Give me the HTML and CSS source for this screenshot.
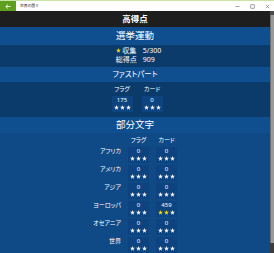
FILE: index.html
```html
<!DOCTYPE html>
<html lang="ja">
<head>
<meta charset="utf-8">
<title>世界の国々</title>
<link rel="stylesheet" href="styles.css">
</head>
<body>
<svg class="defs" width="0" height="0" aria-hidden="true">
  <symbol id="star" viewBox="0 0 10 10"><polygon points="5,0.2 6.25,3.55 9.8,3.7 7.05,5.95 8,9.6 5,7.5 2,9.6 2.95,5.95 0.2,3.7 3.75,3.55"/></symbol>
</svg>
<div class="window">
  <div class="titlebar">
    <div class="back">
      <svg width="6" height="5" viewBox="0 0 6 5"><path d="M3 0.5 L0.8 2.5 L3 4.5 M0.8 2.5 H5.5" fill="none" stroke="#fff" stroke-width="0.8"/></svg>
    </div>
    <div class="title">世界の国々</div>
    <div class="controls">
      <svg width="5" height="5" viewBox="0 0 5 5"><path d="M0.5 2.5 H4.5" stroke="#666" stroke-width="0.6"/></svg>
      <svg width="5" height="5" viewBox="0 0 5 5"><rect x="0.8" y="0.8" width="3.4" height="3.4" fill="none" stroke="#666" stroke-width="0.6"/></svg>
      <svg width="5" height="5" viewBox="0 0 5 5"><path d="M0.8 0.8 L4.2 4.2 M4.2 0.8 L0.8 4.2" stroke="#666" stroke-width="0.6"/></svg>
    </div>
  </div>
  <div class="app">
    <main class="main">
      <div class="header">高得点</div>

      <section class="sec sec-dark">
        <div class="band band-campaign">選挙運動</div>
        <div class="summary">
          <span class="k"><svg class="star gold"><use href="#star"/></svg>収集</span><span class="v">5/300</span>
          <span class="k">総得点</span><span class="v">909</span>
        </div>
      </section>

      <section class="sec sec-dark">
        <div class="band band-first">ファストパート</div>
        <div class="first">
          <div class="colhead">フラグ</div>
          <div class="colhead">カード</div>
          <div class="box"><div class="num">175</div><div class="stars"><svg class="star"><use href="#star"/></svg><svg class="star"><use href="#star"/></svg><svg class="star"><use href="#star"/></svg></div></div>
          <div class="box"><div class="num">0</div><div class="stars"><svg class="star"><use href="#star"/></svg><svg class="star"><use href="#star"/></svg><svg class="star"><use href="#star"/></svg></div></div>
        </div>
      </section>

      <section class="sec sec-light">
        <div class="band band-part">部分文字</div>
        <div class="parts">
          <div></div><div class="colhead">フラグ</div><div class="colhead">カード</div>

          <div class="rowlabel">アフリカ</div>
          <div class="box"><div class="num">0</div><div class="stars"><svg class="star"><use href="#star"/></svg><svg class="star"><use href="#star"/></svg><svg class="star"><use href="#star"/></svg></div></div>
          <div class="box"><div class="num">0</div><div class="stars"><svg class="star"><use href="#star"/></svg><svg class="star"><use href="#star"/></svg><svg class="star"><use href="#star"/></svg></div></div>

          <div class="rowlabel">アメリカ</div>
          <div class="box"><div class="num">0</div><div class="stars"><svg class="star"><use href="#star"/></svg><svg class="star"><use href="#star"/></svg><svg class="star"><use href="#star"/></svg></div></div>
          <div class="box"><div class="num">0</div><div class="stars"><svg class="star"><use href="#star"/></svg><svg class="star"><use href="#star"/></svg><svg class="star"><use href="#star"/></svg></div></div>

          <div class="rowlabel">アジア</div>
          <div class="box"><div class="num">0</div><div class="stars"><svg class="star"><use href="#star"/></svg><svg class="star"><use href="#star"/></svg><svg class="star"><use href="#star"/></svg></div></div>
          <div class="box"><div class="num">0</div><div class="stars"><svg class="star"><use href="#star"/></svg><svg class="star"><use href="#star"/></svg><svg class="star"><use href="#star"/></svg></div></div>

          <div class="rowlabel">ヨーロッパ</div>
          <div class="box"><div class="num">0</div><div class="stars"><svg class="star"><use href="#star"/></svg><svg class="star"><use href="#star"/></svg><svg class="star"><use href="#star"/></svg></div></div>
          <div class="box"><div class="num">459</div><div class="stars"><svg class="star gold"><use href="#star"/></svg><svg class="star gold"><use href="#star"/></svg><svg class="star"><use href="#star"/></svg></div></div>

          <div class="rowlabel">オセアニア</div>
          <div class="box"><div class="num">0</div><div class="stars"><svg class="star"><use href="#star"/></svg><svg class="star"><use href="#star"/></svg><svg class="star"><use href="#star"/></svg></div></div>
          <div class="box"><div class="num">0</div><div class="stars"><svg class="star"><use href="#star"/></svg><svg class="star"><use href="#star"/></svg><svg class="star"><use href="#star"/></svg></div></div>

          <div class="rowlabel">世界</div>
          <div class="box"><div class="num">0</div><div class="stars"><svg class="star"><use href="#star"/></svg><svg class="star"><use href="#star"/></svg><svg class="star"><use href="#star"/></svg></div></div>
          <div class="box"><div class="num">0</div><div class="stars"><svg class="star"><use href="#star"/></svg><svg class="star"><use href="#star"/></svg><svg class="star"><use href="#star"/></svg></div></div>
        </div>
      </section>
    </main>
    <div class="scrollbar">
      <div class="sb-up"></div>
      <div class="sb-track"></div>
      <div class="sb-down"></div>
    </div>
  </div>
</div>
</body>
</html>
```

FILE: styles.css
```css
html, body {
  margin: 0;
  padding: 0;
}
body {
  width: 274px;
  height: 253px;
  overflow: hidden;
  font-family: "Noto Sans", "Noto Sans CJK JP", sans-serif;
  font-feature-settings: "palt";
  color: #fff;
  background: #104a86;
}
.defs {
  position: absolute;
  width: 0;
  height: 0;
}
.window {
  display: flex;
  flex-direction: column;
  height: 253px;
}
.titlebar {
  height: 10px;
  border-top: 1px solid #c9e2a6;
  background: #fff;
  display: flex;
  align-items: center;
  flex: none;
}
.back {
  width: 16px;
  height: 10px;
  background: #5f9f1f;
  display: flex;
  align-items: center;
  justify-content: center;
}
.back svg { display: block; }
.title {
  margin-left: 4px;
  font-size: 3.8px;
  color: #222;
  line-height: 10px;
  flex: 1;
}
.controls {
  display: flex;
  gap: 10px;
  padding-right: 4px;
  align-items: center;
}
.controls svg { display: block; }
.app {
  flex: 1;
  display: flex;
  min-height: 0;
}
.main {
  width: 270px;
  flex: none;
  display: flex;
  flex-direction: column;
}
.header {
  height: 16px;
  background: #1e1e1e;
  text-align: center;
  font-weight: bold;
  font-size: 8.5px;
  line-height: 16px;
}
.band {
  background: #0f4f8f;
  text-align: center;
}
.band-campaign {
  height: 18px;
  line-height: 18px;
  font-size: 9.5px;
}
.band-first {
  height: 15px;
  line-height: 15px;
  font-size: 7.5px;
}
.band-part {
  height: 16px;
  line-height: 16px;
  font-size: 9.5px;
}
.sec-dark { background: #0b3b6b; }
.sec-light { background: #104a86; flex: 1; }

.summary {
  display: grid;
  grid-template-columns: auto auto;
  column-gap: 6px;
  justify-content: center;
  padding: 1px 0 3px 7px;
  font-size: 7px;
  line-height: 9px;
}
.summary .k {
  display: flex;
  align-items: center;
  gap: 1.5px;
}
.summary .star {
  width: 5px;
  height: 5px;
}

.first {
  display: grid;
  grid-template-columns: 21px 21px;
  column-gap: 9px;
  justify-content: center;
  padding: 3px 0 5px 4px;
}
.colhead {
  text-align: center;
  font-size: 6px;
  line-height: 9px;
  white-space: nowrap;
}
.first .colhead { margin-bottom: 2px; }

.parts {
  display: grid;
  grid-template-columns: 121px 21px 21px;
  column-gap: 7px;
  row-gap: 2.5px;
  padding-top: 3px;
}
.rowlabel {
  text-align: right;
  font-size: 6px;
  line-height: 9px;
  white-space: nowrap;
}
.box {
  height: 15.5px;
  background: #0d4480;
  display: flex;
  flex-direction: column;
  align-items: center;
}
.num {
  font-size: 6px;
  line-height: 9px;
}
.stars {
  display: flex;
  gap: 1px;
  margin-top: -0.5px;
}
.star {
  width: 5px;
  height: 5px;
  fill: #f2f2f2;
  display: block;
}
.star.gold { fill: #f5d20a; }

.scrollbar {
  width: 4px;
  flex: none;
  display: flex;
  flex-direction: column;
  background: #8f8f8f;
}
.sb-up {
  height: 4px;
  background: #4a4a4a;
}
.sb-track {
  flex: 1;
  background: linear-gradient(to right, #6d6d6d 0 1px, #9a9a9a 1px);
}
.sb-down {
  height: 10px;
  background: #3c3c3c;
}
```
